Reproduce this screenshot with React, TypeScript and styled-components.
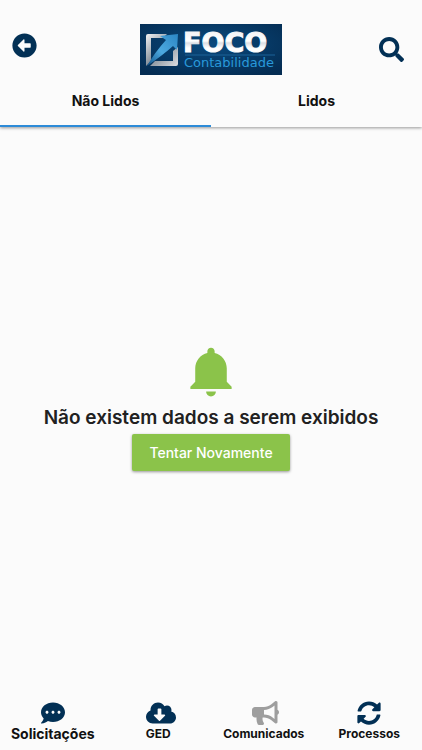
import React, { useState } from "react";
import styled, { createGlobalStyle } from "styled-components";
import {
  FaArrowAltCircleLeft,
  FaBullhorn,
  FaCloudDownloadAlt,
  FaCommentDots,
  FaSearch,
  FaSyncAlt,
} from "react-icons/fa";
import { IoMdNotifications } from "react-icons/io";

const navy = "#023055";
const green = "#8bc34a";

const GlobalStyle = createGlobalStyle`
  * { box-sizing: border-box; }
  body {
    margin: 0;
    background: #fbfbfb;
    color: #111;
    font-family: Inter, "Liberation Sans", sans-serif;
  }
  button { font: inherit; color: inherit; }
`;

const Screen = styled.div`
  min-height: 100vh;
  display: flex;
  flex-direction: column;
`;

const Top = styled.header`
  box-shadow: 0 1px 3px rgba(0, 0, 0, 0.4);
`;

const Toolbar = styled.div`
  display: grid;
  grid-template-columns: 1fr auto 1fr;
  padding: 24px 12px 0;
`;

const IconButton = styled.button<{ $end?: boolean }>`
  justify-self: ${(p) => (p.$end ? "end" : "start")};
  align-self: ${(p) => (p.$end ? "center" : "start")};
  display: flex;
  padding: ${(p) => (p.$end ? "0 6px 0 0" : "9px 0 0")};
  border: 0;
  background: none;
  color: ${navy};
  cursor: pointer;
`;

const Logo = styled.svg`
  display: block;
  width: 142px;
  height: 51px;
`;

const Tabs = styled.div`
  display: grid;
  grid-template-columns: 1fr 1fr;
`;

const Tab = styled.button<{ $active: boolean }>`
  height: 52px;
  padding: 0;
  border: 0;
  border-bottom: 2px solid ${(p) => (p.$active ? "#2d8bd8" : "transparent")};
  background: none;
  font-size: 14px;
  font-weight: 700;
  cursor: pointer;
`;

const Empty = styled.main`
  flex: 1;
  display: flex;
  flex-direction: column;
  align-items: center;
  justify-content: center;
  padding-bottom: 15px;
  color: ${green};
`;

const Message = styled.p`
  margin: 4px 0;
  color: #212121;
  font-size: 19px;
  line-height: 24px;
  font-weight: 600;
  text-align: center;
`;

const Retry = styled.button`
  height: 37px;
  padding: 0 17px;
  border: 0;
  border-radius: 2px;
  background: ${green};
  box-shadow: 0 1px 3px rgba(0, 0, 0, 0.4);
  color: #fff;
  font-size: 14px;
  font-weight: 500;
  cursor: pointer;
`;

const BottomNav = styled.nav`
  display: grid;
  grid-template-columns: repeat(4, 1fr);
  padding-bottom: 7px;
`;

const NavItem = styled.a<{ $active?: boolean }>`
  display: flex;
  flex-direction: column;
  align-items: center;
  color: ${(p) => (p.$active ? "#9e9e9e" : navy)};
  text-decoration: none;
`;

const NavIcon = styled.span<{ $width: number }>`
  display: flex;
  width: 24px;

  svg {
    flex-shrink: 0;
    width: ${(p) => p.$width}px;
    height: 24px;
  }
`;

const NavLabel = styled.span<{ $large?: boolean }>`
  color: #111;
  font-size: ${(p) => (p.$large ? 14 : 12)}px;
  line-height: 18px;
  font-weight: 700;
  white-space: nowrap;
`;

const navItems = [
  { label: "Solicitações", Icon: FaCommentDots, width: 24, large: true },
  { label: "GED", Icon: FaCloudDownloadAlt, width: 30 },
  { label: "Comunicados", Icon: FaBullhorn, width: 27, active: true },
  { label: "Processos", Icon: FaSyncAlt, width: 24 },
];

function FocoLogo() {
  return (
    <Logo viewBox="0 0 142 51" role="img" aria-label="FOCO Contabilidade">
      <defs>
        <radialGradient id="logoBg" cx="0.5" cy="0.4" r="0.7">
          <stop offset="0" stopColor="#0a4a7e" />
          <stop offset="1" stopColor="#042c52" />
        </radialGradient>
        <linearGradient id="metal" gradientUnits="userSpaceOnUse" x1="0" y1="8" x2="0" y2="28">
          <stop offset="0" stopColor="#f4f4f6" />
          <stop offset="0.45" stopColor="#ffffff" />
          <stop offset="0.55" stopColor="#dcdfe4" />
          <stop offset="0.8" stopColor="#ffffff" />
        </linearGradient>
        <linearGradient id="frame" x1="0" y1="0" x2="1" y2="1">
          <stop offset="0" stopColor="#f2f2f3" />
          <stop offset="0.5" stopColor="#85909b" />
          <stop offset="1" stopColor="#dedfe2" />
        </linearGradient>
        <linearGradient id="arrow" x1="1" y1="0" x2="0" y2="1">
          <stop offset="0" stopColor="#2b86c4" />
          <stop offset="0.55" stopColor="#4da9df" />
          <stop offset="1" stopColor="#0c5088" />
        </linearGradient>
      </defs>
      <rect width="142" height="51" fill="url(#logoBg)" />
      <path d="M8 10H27L23 14H11V37L6 42V12Q6 10 8 10ZM38 23V40Q38 42 36 42H10L15 37H33V27Z" fill="url(#frame)" />
      <path d="M20 12L38 10L37 26L33 22Q23 31 7 42Q15 28 26 16Z" fill="url(#arrow)" />
      <text
        x="43"
        y="28"
        fill="url(#metal)"
        stroke="url(#metal)"
        strokeWidth="1"
        fontFamily='"DejaVu Sans", sans-serif'
        fontWeight="700"
        fontSize="27"
      >
        FOCO
      </text>
      <path d="M45 31H135" stroke="#1b6298" strokeWidth="1" />
      <text
        x="44"
        y="43"
        fill="#2999da"
        fontFamily='"DejaVu Sans", sans-serif'
        fontSize="13"
      >
        Contabilidade
      </text>
    </Logo>
  );
}

export default function App() {
  const [tab, setTab] = useState(0);
  return (
    <Screen>
      <GlobalStyle />
      <Top>
        <Toolbar>
          <IconButton aria-label="Voltar">
            <FaArrowAltCircleLeft size={25} />
          </IconButton>
          <FocoLogo />
          <IconButton $end aria-label="Pesquisar">
            <FaSearch size={25} />
          </IconButton>
        </Toolbar>
        <Tabs role="tablist">
          {["Não Lidos", "Lidos"].map((name, i) => (
            <Tab
              key={name}
              role="tab"
              aria-selected={tab === i}
              $active={tab === i}
              onClick={() => setTab(i)}
            >
              {name}
            </Tab>
          ))}
        </Tabs>
      </Top>
      <Empty>
        <IoMdNotifications size={60} />
        <Message>Não existem dados a serem exibidos</Message>
        <Retry>Tentar Novamente</Retry>
      </Empty>
      <BottomNav>
        {navItems.map(({ label, Icon, width, large, active }) => (
          <NavItem key={label} href="#" $active={active}>
            <NavIcon $width={width}>
              <Icon />
            </NavIcon>
            <NavLabel $large={large}>{label}</NavLabel>
          </NavItem>
        ))}
      </BottomNav>
    </Screen>
  );
}
